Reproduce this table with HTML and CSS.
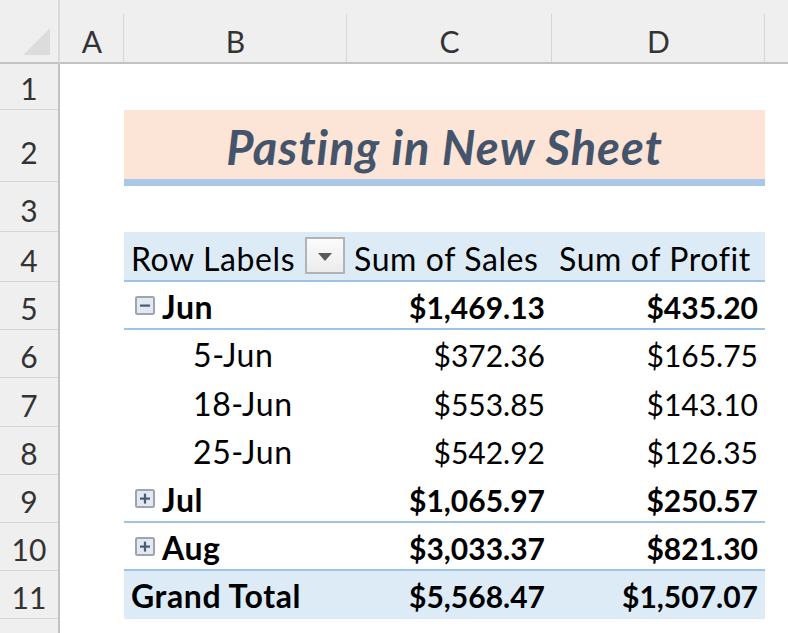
FILE: index.html
```html
<!DOCTYPE html>
<html lang="en">
<head>
<meta charset="utf-8">
<title>Pasting in New Sheet</title>
<link rel="stylesheet" href="styles.css">
</head>
<body>
<div class="sheet">
  <!-- column headers -->
  <div class="corner">
    <svg class="corner-tri" width="27" height="27" viewBox="0 0 27 27"><polygon points="27,0 27,27 0,27" fill="#dcdcdc"/></svg>
  </div>
  <div class="ch">A</div>
  <div class="ch">B</div>
  <div class="ch">C</div>
  <div class="ch">D</div>
  <div class="ch ch-last"></div>

  <!-- row 1 -->
  <div class="rh">1</div>
  <div class="blank span5"></div>

  <!-- row 2 -->
  <div class="rh rh-tall">2</div>
  <div class="blank"></div>
  <div class="title">Pasting in New Sheet</div>
  <div class="blank"></div>

  <!-- row 3 -->
  <div class="rh">3</div>
  <div class="blank span5"></div>

  <!-- row 4 -->
  <div class="rh">4</div>
  <div class="blank"></div>
  <div class="pv hd line">Row Labels<span class="dd"><span class="dd-tri"></span></span></div>
  <div class="pv hd line">Sum of Sales</div>
  <div class="pv hd line">Sum of Profit</div>
  <div class="blank"></div>

  <!-- row 5 -->
  <div class="rh">5</div>
  <div class="blank"></div>
  <div class="pv b line"><svg class="tog" width="20" height="19" viewBox="0 0 20 19"><rect x="1" y="1" width="18" height="17" rx="1.5" fill="#e4e8ef" stroke="#9aa5b8" stroke-width="2"/><rect x="5" y="8.5" width="10" height="2.2" fill="#4b5a76"/></svg>Jun</div>
  <div class="pv b num line">$1,469.13</div>
  <div class="pv b num line">$435.20</div>
  <div class="blank"></div>

  <!-- row 6 -->
  <div class="rh">6</div>
  <div class="blank"></div>
  <div class="pv child">5-Jun</div>
  <div class="pv num">$372.36</div>
  <div class="pv num">$165.75</div>
  <div class="blank"></div>

  <!-- row 7 -->
  <div class="rh">7</div>
  <div class="blank"></div>
  <div class="pv child">18-Jun</div>
  <div class="pv num">$553.85</div>
  <div class="pv num">$143.10</div>
  <div class="blank"></div>

  <!-- row 8 -->
  <div class="rh">8</div>
  <div class="blank"></div>
  <div class="pv child">25-Jun</div>
  <div class="pv num">$542.92</div>
  <div class="pv num">$126.35</div>
  <div class="blank"></div>

  <!-- row 9 -->
  <div class="rh">9</div>
  <div class="blank"></div>
  <div class="pv b line"><svg class="tog" width="20" height="19" viewBox="0 0 20 19"><rect x="1" y="1" width="18" height="17" rx="1.5" fill="#e4e8ef" stroke="#9aa5b8" stroke-width="2"/><rect x="5" y="8.5" width="10" height="2.2" fill="#4b5a76"/><rect x="8.9" y="4.6" width="2.2" height="10" fill="#4b5a76"/></svg>Jul</div>
  <div class="pv b num line">$1,065.97</div>
  <div class="pv b num line">$250.57</div>
  <div class="blank"></div>

  <!-- row 10 -->
  <div class="rh">10</div>
  <div class="blank"></div>
  <div class="pv b line"><svg class="tog" width="20" height="19" viewBox="0 0 20 19"><rect x="1" y="1" width="18" height="17" rx="1.5" fill="#e4e8ef" stroke="#9aa5b8" stroke-width="2"/><rect x="5" y="8.5" width="10" height="2.2" fill="#4b5a76"/><rect x="8.9" y="4.6" width="2.2" height="10" fill="#4b5a76"/></svg>Aug</div>
  <div class="pv b num line">$3,033.37</div>
  <div class="pv b num line">$821.30</div>
  <div class="blank"></div>

  <!-- row 11 -->
  <div class="rh">11</div>
  <div class="blank"></div>
  <div class="pv b gt">Grand Total</div>
  <div class="pv b num gt">$5,568.47</div>
  <div class="pv b num gt">$1,507.07</div>
  <div class="blank"></div>

  <!-- row 12 -->
  <div class="rh rh-last"></div>
  <div class="blank span5"></div>
</div>
</body>
</html>
```

FILE: styles.css
```css
* { box-sizing: border-box; }

html, body {
  margin: 0;
  padding: 0;
  background: #ffffff;
}

body {
  font-family: Lato, "Open Sans", sans-serif;
  font-size: 30px;
  color: #000;
  overflow: hidden;
}

.sheet {
  display: grid;
  width: 788px;
  height: 633px;
  grid-template-columns: 60px 64px 223px 205px 213px 1fr;
  grid-template-rows: 64px 46px 72px 50px 50px 48px 48px 49px 48px 48px 48px 48px 1fr;
}

/* ---------- headers ---------- */
.corner {
  background: #efefef;
  border-bottom: 2px solid #c2c2c2;
  border-right: 2px solid #dadada;
  display: flex;
  align-items: flex-end;
  justify-content: flex-end;
  padding: 0 8px 7px 0;
}

.ch {
  background: #efefef linear-gradient(#d6d6d6, #d6d6d6) no-repeat right 0 bottom 0 / 1px calc(100% - 14px);
  border-bottom: 2px solid #c2c2c2;
  display: flex;
  align-items: flex-end;
  justify-content: center;
  padding-bottom: 3px;
  line-height: 36px;
  color: #333;
  font-size: 30px;
}

.ch-last { background: #efefef; }

.rh {
  background: #efefef linear-gradient(#d6d6d6, #d6d6d6) no-repeat left 0 bottom 0 / 100% 1px;
  border-right: 2px solid #c2c2c2;
  display: flex;
  align-items: flex-end;
  justify-content: center;
  padding-bottom: 4px;
  line-height: 36px;
  color: #333;
  font-size: 30px;
}

.rh-tall { padding-bottom: 12px; }
.rh-last { background: #efefef; }

.span5 { grid-column: span 5; }

/* ---------- title ---------- */
.title {
  grid-column: span 3;
  align-self: start;
  position: relative;
  z-index: 1;
  height: 76px;
  background: #fce4d6;
  border-bottom: 7px solid #a9c8e8;
  text-align: center;
  padding-top: 9px;
  font-size: 47px;
  line-height: 56px;
  letter-spacing: 1px;
  font-weight: 700;
  font-style: italic;
  color: #44546a;
  white-space: nowrap;
}

/* ---------- pivot ---------- */
.pv {
  display: flex;
  align-items: flex-end;
  padding: 0 7px 5px 7px;
  font-size: 32px;
  letter-spacing: 0.6px;
  line-height: 36px;
  white-space: nowrap;
}

.pv.line {
  border-bottom: 2px solid #9dc3e6;
  padding-bottom: 3px;
}

.hd { background: #ddebf7; }
.gt { background: #ddebf7; }
.b { font-weight: 700; }
.num {
  justify-content: flex-end;
  font-size: 30px;
  letter-spacing: 0;
}
.child { padding-left: 69px; }

.tog {
  flex: none;
  margin: 0 7px 10px 4px;
}

.dd {
  flex: none;
  align-self: flex-start;
  margin: 5px -5px 0 auto;
  width: 40px;
  height: 37px;
  border: 2px solid #b3b3b3;
  background: linear-gradient(#fbfbfb, #ececec);
  display: flex;
  align-items: center;
  justify-content: center;
}

.dd-tri {
  width: 0;
  height: 0;
  border-left: 7px solid transparent;
  border-right: 7px solid transparent;
  border-top: 8px solid #5a5a5a;
  margin-top: 3px;
}
```
